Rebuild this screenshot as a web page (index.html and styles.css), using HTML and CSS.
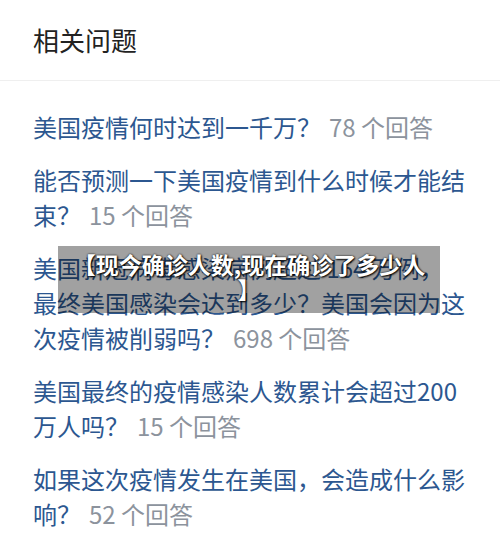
FILE: index.html
```html
<!DOCTYPE html>
<html lang="zh-CN">
<head>
<meta charset="utf-8">
<title>相关问题</title>
<link rel="stylesheet" href="styles.css">
</head>
<body>
<div class="page">
  <div class="header"><h2 class="title">相关问题</h2></div>
  <ul class="list">
    <li class="item"><span class="q">美国疫情何时达到一千万？</span><span class="count">78 个回答</span></li>
    <li class="item"><span class="q">能否预测一下美国疫情到什么时候才能结束？</span><span class="count">15 个回答</span></li>
    <li class="item"><span class="q">美国新冠病毒感染病例超过 164 万例，最终美国感染会达到多少？美国会因为这次疫情被削弱吗？</span><span class="count">698 个回答</span></li>
    <li class="item"><span class="q">美国最终的疫情感染人数累计会超过200万人吗？</span><span class="count">15 个回答</span></li>
    <li class="item"><span class="q">如果这次疫情发生在美国，会造成什么影响？</span><span class="count">52 个回答</span></li>
  </ul>
  <div class="overlay">【现今确诊人数,现在确诊了多少人】</div>
</div>
</body>
</html>
```

FILE: styles.css
```css
html, body {
  margin: 0;
  padding: 0;
  background: #ffffff;
}
body {
  font-family: "Noto Sans CJK SC", "Noto Sans", sans-serif;
}
.page {
  position: relative;
  width: 500px;
  height: 560px;
  overflow: hidden;
}
.header {
  height: 81px;
  display: flex;
  align-items: center;
  padding: 0 33px;
  border-bottom: 1px solid #efefef;
  box-sizing: border-box;
}
.title {
  margin: 0;
  font-size: 26px;
  font-weight: normal;
  color: #222222;
  line-height: 1;
}
.list {
  list-style: none;
  margin: 0;
  padding: 28px 33px 0 33px;
  display: flex;
  flex-direction: column;
  gap: 18px;
}
.item {
  font-size: 24px;
  line-height: 35px;
  color: #2c5790;
}
.count {
  color: #8c939d;
  margin-left: 8px;
}
.overlay {
  position: absolute;
  left: 58px;
  top: 246px;
  width: 382px;
  height: 67px;
  box-sizing: border-box;
  padding: 6px 13px;
  background: rgba(0, 0, 0, 0.37);
  color: #ffffff;
  font-size: 23px;
  font-weight: bold;
  line-height: 25px;
  text-align: center;
  line-break: anywhere;
  text-shadow: 1px 1px 2px #000000, 0 0 2px #000000;
}
```
